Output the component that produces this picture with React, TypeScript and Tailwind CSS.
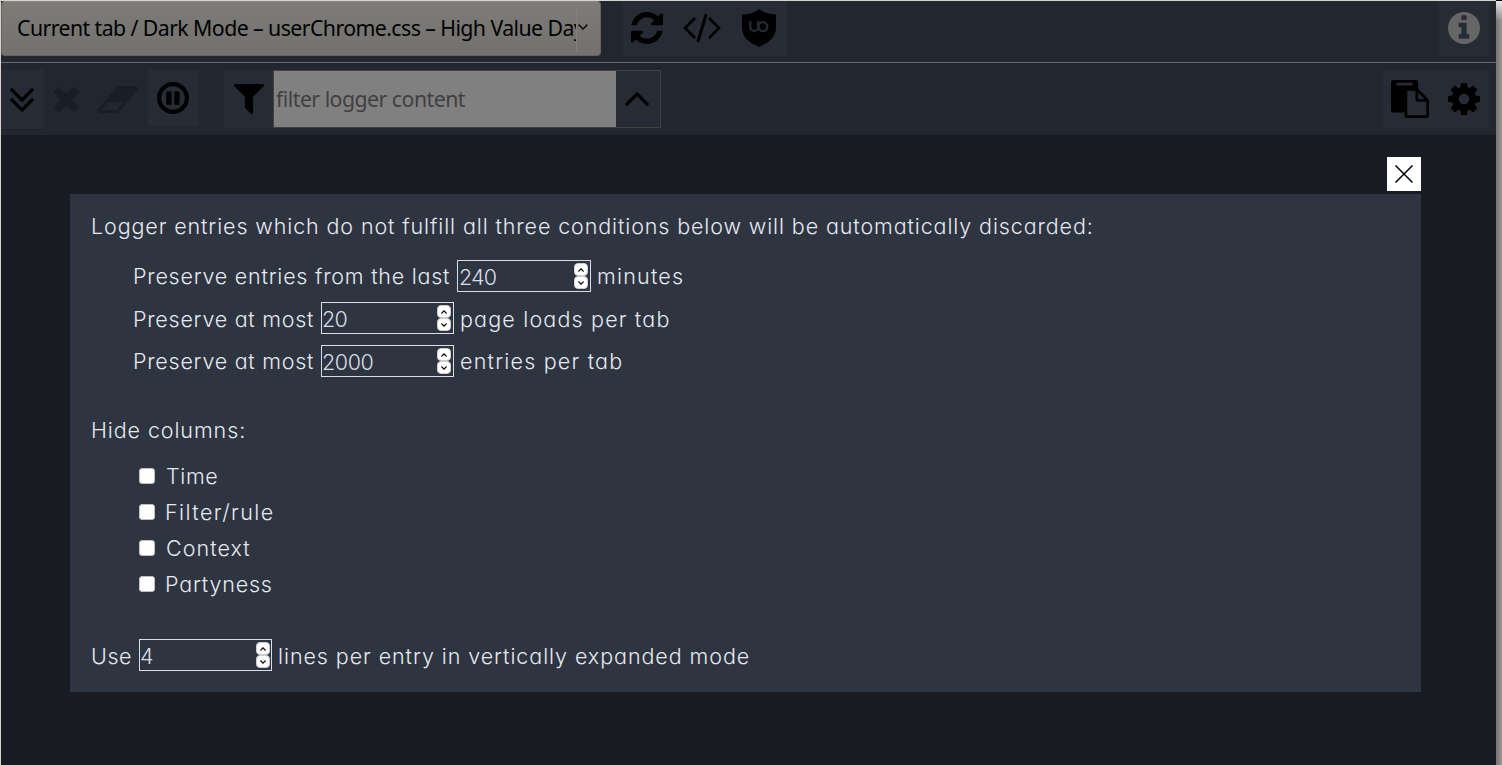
import React from "react";

type IconProps = { box: string; d: string; className: string };

function Icon({ box, d, className }: IconProps) {
  return (
    <svg viewBox={box} className={className} fill="currentColor" fillRule="evenodd" preserveAspectRatio="none">
      <path d={d} />
    </svg>
  );
}

const ANGLE_UP =
  "m 998,499 q 0,13 -10,23 l -50,50 q -10,10 -23,10 -13,0 -23,-10 L 499,179 106,572 Q 96,582 83,582 70,582 60,572 L 10,522 Q 0,512 0,499 0,486 10,476 L 476,10 q 10,-10 23,-10 13,0 23,10 l 466,466 q 10,10 10,23 z";
const TIMES =
  "m 1188,956 q 0,40 -28,68 l -136,136 q -28,28 -68,28 -40,0 -68,-28 L 594,866 300,1160 q -28,28 -68,28 -40,0 -68,-28 L 28,1024 Q 0,996 0,956 0,916 28,888 L 322,594 28,300 Q 0,272 0,232 0,192 28,164 L 164,28 Q 192,0 232,0 272,0 300,28 L 594,322 888,28 q 28,-28 68,-28 40,0 68,28 l 136,136 q 28,28 28,68 0,40 -28,68 l -294,294 294,294 q 28,28 28,68 z";
const ERASER =
  "m 896,1152 336,-384 -768,0 -336,384 768,0 z M 1909,75 q 15,34 9.5,71.5 -5.5,37.5 -30.5,65.5 L 992,1236 q -38,44 -96,44 l -768,0 q -38,0 -69.5,-20.5 Q 27,1239 11,1205 -4,1171 1.5,1133.5 7,1096 32,1068 L 928,44 q 38,-44 96,-44 l 768,0 q 38,0 69.5,20.5 Q 1893,41 1909,75 z";
const FILTER =
  "m 1404,39 q 17,41 -14,70 l -493,493 0,742 q 0,42 -39,59 -13,5 -25,5 -27,0 -45,-19 l -256,-256 q -19,-19 -19,-45 l 0,-486 L 20,109 q -31,-29 -14,-70 17,-39 59,-39 l 1280,0 q 42,0 59,39 z";
const REFRESH =
  "m 1511,928 q 0,5 -1,7 -64,268 -268,434.5 Q 1038,1536 764,1536 618,1536 481.5,1481 345,1426 238,1324 l -129,129 q -19,19 -45,19 -26,0 -45,-19 Q 0,1434 0,1408 L 0,960 q 0,-26 19,-45 19,-19 45,-19 l 448,0 q 26,0 45,19 19,19 19,45 0,26 -19,45 l -137,137 q 71,66 161,102 90,36 187,36 134,0 250,-65 116,-65 186,-179 11,-17 53,-117 8,-23 30,-23 l 192,0 q 13,0 22.5,9.5 9.5,9.5 9.5,22.5 z m 25,-800 0,448 q 0,26 -19,45 -19,19 -45,19 l -448,0 q -26,0 -45,-19 -19,-19 -19,-45 0,-26 19,-45 L 1117,393 Q 969,256 768,256 q -134,0 -250,65 -116,65 -186,179 -11,17 -53,117 -8,23 -30,23 L 50,640 Q 37,640 27.5,630.5 18,621 18,608 l 0,-7 Q 83,333 288,166.5 493,0 768,0 914,0 1052,55.5 1190,111 1297,212 L 1427,83 q 19,-19 45,-19 26,0 45,19 19,19 19,45 z";
const COG =
  "m 1024,768 q 0,-106 -75,-181 -75,-75 -181,-75 -106,0 -181,75 -75,75 -75,181 0,106 75,181 75,75 181,75 106,0 181,-75 75,-75 75,-181 z m 512,-109 0,222 q 0,12 -8,23 -8,11 -20,13 l -185,28 q -19,54 -39,91 35,50 107,138 10,12 10,25 0,13 -9,23 -27,37 -99,108 -72,71 -94,71 -12,0 -26,-9 l -138,-108 q -44,23 -91,38 -16,136 -29,186 -7,28 -36,28 l -222,0 q -14,0 -24.5,-8.5 Q 622,1519 621,1506 L 593,1322 q -49,-16 -90,-37 l -141,107 q -10,9 -25,9 -14,0 -25,-11 -126,-114 -165,-168 -7,-10 -7,-23 0,-12 8,-23 15,-21 51,-66.5 36,-45.5 54,-70.5 -27,-50 -41,-99 L 29,913 Q 16,911 8,900.5 0,890 0,877 L 0,655 q 0,-12 8,-23 8,-11 19,-13 l 186,-28 q 14,-46 39,-92 -40,-57 -107,-138 -10,-12 -10,-24 0,-10 9,-23 26,-36 98.5,-107.5 Q 315,135 337,135 q 13,0 26,10 L 501,252 Q 545,229 592,214 608,78 621,28 628,0 657,0 L 879,0 q 14,0 24.5,8.5 Q 914,17 915,30 l 28,184 q 49,16 90,37 l 142,-107 q 9,-9 24,-9 13,0 25,10 129,119 165,170 7,8 7,22 0,12 -8,23 -15,21 -51,66.5 -36,45.5 -54,70.5 26,50 41,98 l 183,28 q 13,2 21,12.5 8,10.5 8,23.5 z";
const INFO =
  "M 1024,1248 V 1088 q 0,-14 -9,-23 -9,-9 -23,-9 h -96 V 544 q 0,-14 -9,-23 -9,-9 -23,-9 H 544 q -14,0 -23,9 -9,9 -9,23 v 160 q 0,14 9,23 9,9 23,9 h 96 v 320 h -96 q -14,0 -23,9 -9,9 -9,23 v 160 q 0,14 9,23 9,9 23,9 h 448 q 14,0 23,-9 9,-9 9,-23 z M 896,352 V 192 q 0,-14 -9,-23 -9,-9 -23,-9 H 672 q -14,0 -23,9 -9,9 -9,23 v 160 q 0,14 9,23 9,9 23,9 h 192 q 14,0 23,-9 9,-9 9,-23 z M 1536,768 A 768,768 0 1 1 0,768 A 768,768 0 1 1 1536,768 z";
const CLIPBOARD =
  "m 768,1664 896,0 0,-640 -416,0 q -40,0 -68,-28 -28,-28 -28,-68 l 0,-416 -384,0 0,1152 z m 256,-1440 0,-64 q 0,-13 -9.5,-22.5 Q 1005,128 992,128 l -704,0 q -13,0 -22.5,9.5 Q 256,147 256,160 l 0,64 q 0,13 9.5,22.5 9.5,9.5 22.5,9.5 l 704,0 q 13,0 22.5,-9.5 9.5,-9.5 9.5,-22.5 z m 256,672 299,0 -299,-299 0,299 z m 512,128 0,672 q 0,40 -28,68 -28,28 -68,28 l -960,0 q -40,0 -68,-28 -28,-28 -28,-68 l 0,-160 -544,0 Q 56,1536 28,1508 0,1480 0,1440 L 0,96 Q 0,56 28,28 56,0 96,0 L 1184,0 q 40,0 68,28 28,28 28,68 l 0,328 q 21,13 36,28 l 408,408 q 28,28 48,76 20,48 20,88 z";

function TopBar() {
  return (
    <div className="flex h-[62px] shrink-0 border-b border-[#6d6b6c] pr-[6px]">
      <div className="flex h-[55px] w-[600px] shrink-0 items-center rounded-[4px] border border-t-[#8a8884] border-r-[#67635f] border-b-[#67635f] border-l-[#67635f] bg-linear-to-b from-[#7d7c79] to-[#73716e] pl-[15px] text-black">
        <span className="mb-[2px] w-[559px] overflow-hidden text-[21.3px] leading-[30px] tracking-[-0.58px] whitespace-nowrap">
          Current tab / Dark Mode – userChrome.css – High Value Day
        </span>
        <span className="h-12 w-px bg-[#82807d]" />
        <svg viewBox="0 0 10 6" className="mb-[3px] ml-px h-[6px] w-[10px] shrink-0" fill="none" stroke="#151515" strokeWidth="1.6">
          <path d="M.6.6 5 5 9.4.6" />
        </svg>
      </div>
      <div className="ml-[21px] flex h-[55px] w-[165px] items-center bg-[#272b35] pb-[2px] pl-[9px] text-black">
        <Icon box="0 0 1536 1536" d={REFRESH} className="size-8" />
        <svg viewBox="0 0 38 30" className="ml-5 h-[30px] w-[38px]" fill="none" stroke="currentColor" strokeWidth="2.6">
          <path d="M12 5 2 15l10 10M26 5l10 10-10 10" />
          <path d="M23.2 1 14.8 29" strokeWidth="3" />
        </svg>
        <svg viewBox="0 0 34 38" className="ml-[21px] h-[38px] w-[34px]">
          <path fill="currentColor" d="M17 0C22 4 27 5.5 34 5.5V18c0 10-6 15-17 20C6 33 0 28 0 18V5.500C7 5.500 12 4 17 0Z" />
          <g fill="none" stroke="#272b35" strokeWidth="2.200">
            <path d="M8.300 12v6a4 4 0 0 0 8 0V12" />
            <circle cx="20.800" cy="17.600" r="4.500" />
          </g>
        </svg>
      </div>
      <div className="ml-auto flex h-[55px] w-[52px] items-center justify-center bg-[#272b35] pb-[2px] text-[#666666]">
        <Icon box="0 0 1536 1536" d={INFO} className="size-8" />
      </div>
    </div>
  );
}

function FilterBar() {
  return (
    <div className="flex h-[72px] shrink-0 items-start pt-[7px] pr-[6px] text-black">
      <div className="flex h-[59px] w-[43px] items-center justify-center bg-[#272b35] pr-[2px]">
        <div className="flex -scale-y-100 flex-col">
          <Icon box="0 0 998 582" d={ANGLE_UP} className="h-[14px] w-6" />
          <Icon box="0 0 998 582" d={ANGLE_UP} className="-mt-1 h-[14px] w-6" />
        </div>
      </div>
      <div className="flex h-[58px] w-[104px] items-center pl-[10px] text-[#191d25]">
        <Icon box="0 0 1188 1188" d={TIMES} className="size-[25px]" />
        <Icon box="0 0 1920 1280" d={ERASER} className="ml-[19px] h-[27px] w-10" />
      </div>
      <div className="flex h-14 w-[51px] items-center justify-center bg-[#272b35] pr-[2px]">
        <svg viewBox="0 0 32 32" className="size-8">
          <circle cx="16" cy="16" r="13.900" fill="none" stroke="currentColor" strokeWidth="4.200" />
          <path fill="currentColor" d="M9.300 9.400h5.300v13.300H9.300zM17.300 9.400h5.300v13.300h-5.300z" />
        </svg>
      </div>
      <div className="ml-[25px] flex h-[58px] w-[49px] items-center justify-center bg-[#272b35]">
        <Icon box="0 0 1410 1408" d={FILTER} className="size-[30px]" />
      </div>
      <div className="flex h-[58px] w-[388px] border border-[#434040]">
        <div className="flex w-[342px] items-center bg-[#808080] pl-[2px] text-[21.3px] tracking-[-0.53px] text-[#404040]">
          filter logger content
        </div>
        <div className="flex flex-1 items-center bg-[#272b35] pl-[9px]">
          <Icon box="0 0 998 582" d={ANGLE_UP} className="h-[14px] w-6" />
        </div>
      </div>
      <div className="ml-auto flex h-[58px] w-[108px] items-center bg-[#272b35] pl-[9px]">
        <Icon box="0 0 1792 1792" d={CLIPBOARD} className="size-[38px]" />
        <Icon box="0 0 1536 1536" d={COG} className="ml-[19px] size-8" />
      </div>
    </div>
  );
}

function Spin({ up }: { up?: boolean }) {
  return (
    <span className="flex h-[13px] w-[14px] items-center justify-center rounded-[4px] border border-[#d0ccc8] bg-white">
      <svg viewBox="0 0 6 4" className="h-1 w-1.5" fill="none" stroke="#111" strokeWidth="1.3">
        <path d={up ? "M.4 3.500 3 .9l2.600 2.600" : "M.4.5 3 3.100 5.600.5"} />
      </svg>
    </span>
  );
}

function NumberBox({ value, className }: { value: string; className: string }) {
  return (
    <span className={"mr-[6px] flex h-8 shrink-0 items-center justify-between border border-[#d8dee9] text-[#d8dee9] " + className}>
      <span className="pt-px leading-7">{value}</span>
      <span className="flex flex-col">
        <Spin up />
        <Spin />
      </span>
    </span>
  );
}

function CheckRow({ label, className }: { label: string; className: string }) {
  return (
    <label className="flex h-9 items-center">
      <span className="size-4 rounded-[3px] border border-[#c4bfba] bg-white" />
      <span className={className}>{label}</span>
    </label>
  );
}

function Settings() {
  return (
    <div className="flex h-[498px] w-[1351px] flex-col bg-[#2e3440] pl-[21px] font-['Inter',sans-serif] text-[21.5px] leading-8 font-light whitespace-nowrap text-[#e5e9f0] [font-feature-settings:'cv11']">
      <div className="mt-4 h-8 tracking-[0.88px]">
        Logger entries which do not fulfill all three conditions below will be automatically discarded:
      </div>
      <div className="mt-[18px] flex h-8 pl-[42px]">
        <span className="w-[324px] tracking-[0.76px]">Preserve entries from the last</span>
        <NumberBox value="240" className="w-[134px] pr-[2px] pl-px tracking-[-0.8px]" />
        <span className="tracking-[1.2px]">minutes</span>
      </div>
      <div className="mt-[10px] flex h-8 pl-[42px] leading-[34px]">
        <span className="w-[188px] tracking-[0.74px]">Preserve at most</span>
        <NumberBox value="20" className="w-[133px] pr-[2px] tracking-[-0.8px]" />
        <span className="tracking-[1.17px]">page loads per tab</span>
      </div>
      <div className="mt-[11px] flex h-8 pl-[42px]">
        <span className="w-[188px] tracking-[0.74px]">Preserve at most</span>
        <NumberBox value="2000" className="w-[133px] pr-[2px] tracking-[-0.4px]" />
        <span className="tracking-[1.2px]">entries per tab</span>
      </div>
      <div className="mt-[37px] h-8 tracking-[0.9px]">Hide columns:</div>
      <div className="mt-[12px] flex flex-col pl-[48px]">
        <CheckRow label="Time" className="pl-[11px] tracking-[0.6px]" />
        <CheckRow label="Filter/rule" className="pl-[10px] tracking-[1.4px]" />
        <CheckRow label="Context" className="pl-[11px] tracking-[1.05px]" />
        <CheckRow label="Partyness" className="pl-[10px] tracking-[0.8px]" />
      </div>
      <div className="mt-[37px] flex h-8 leading-[34px]">
        <span className="w-[48px] tracking-[0.6px]">Use</span>
        <NumberBox value="4" className="w-[133px] pr-px tracking-[-0.8px]" />
        <span className="tracking-[0.92px]">lines per entry in vertically expanded mode</span>
      </div>
    </div>
  );
}

export default function App() {
  return (
    <div className="flex h-[765px] w-[1502px] overflow-hidden bg-black font-['Noto_Sans',sans-serif]">
      <div className="flex w-[1496px] shrink-0 flex-col border-t border-l border-[#d6d3c8] bg-[#22262e]">
        <TopBar />
        <FilterBar />
        <div className="flex flex-1 flex-col bg-[#181b22] pt-[22px] pl-[69px]">
          <div className="ml-[1317px] flex size-[34px] items-center justify-center bg-white">
            <svg viewBox="0 0 18 18" className="size-[18px]" fill="none" stroke="#000" strokeWidth="1.500">
              <path d="M.5.5l17 17M17.500.5l-17 17" />
            </svg>
          </div>
          <div className="mt-[3px]">
            <Settings />
          </div>
        </div>
      </div>
      <div className="mt-px w-[6px] bg-linear-to-r from-[#75736f] to-[#9b9994]">
        <div className="h-5 bg-linear-to-b from-[#e8e8e8] to-transparent" />
      </div>
    </div>
  );
}
